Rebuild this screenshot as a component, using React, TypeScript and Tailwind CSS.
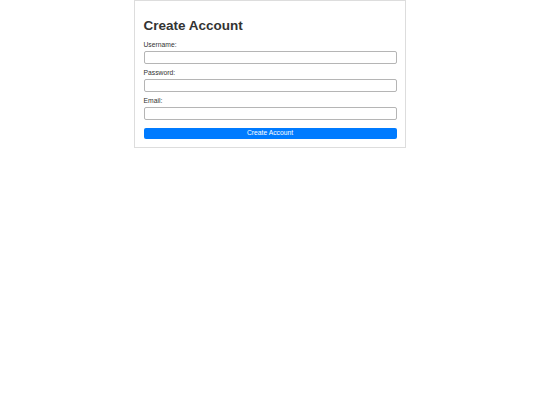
import React from "react";

export default function App() {
  const fields = ["Username:", "Password:", "Email:"];
  return (
    <div className="w-full bg-white font-['Liberation_Sans',Arial,sans-serif] text-[#333]">
      <div className="mx-auto w-[272px] border border-[#ddd] bg-white px-[8.5px] pt-[17px] pb-[8px]">
        <h2 className="mb-[7px] text-[13.5px] font-bold leading-[15.5px] text-[#333]">
          Create Account
        </h2>
        {fields.map((f) => (
          <div key={f} className="mb-[4.5px]">
            <label className="mb-[2.75px] block text-[6.75px] leading-[7.75px] text-[#333]">
              {f}
            </label>
            <div className="h-[13px] w-full rounded-[2px] border border-[#b5b5b5] bg-white" />
          </div>
        ))}
        <button className="mt-[7.5px] flex h-[11.5px] w-full items-center justify-center rounded-[2px] bg-[#007bff] text-[6.75px] leading-none text-white">
          Create Account
        </button>
      </div>
    </div>
  );
}
